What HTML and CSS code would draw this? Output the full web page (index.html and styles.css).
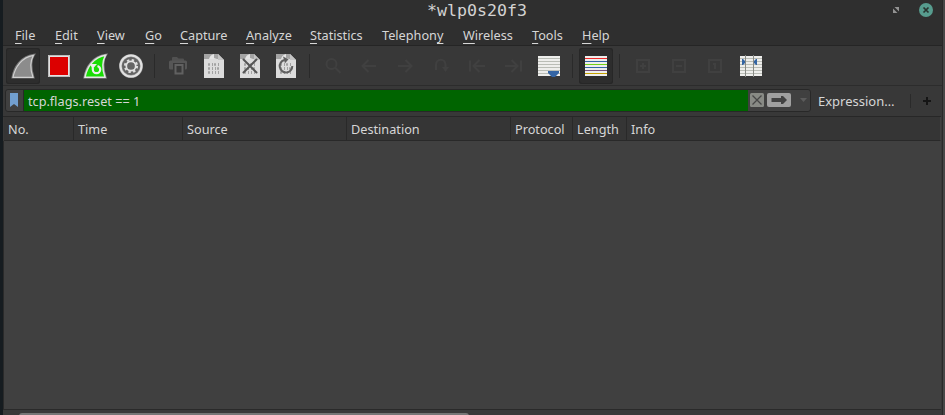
FILE: index.html
```html
<!DOCTYPE html>
<html lang="en">
<head>
<meta charset="utf-8">
<title>*wlp0s20f3</title>
<link rel="stylesheet" href="styles.css">
</head>
<body>
<svg class="defs" width="0" height="0" aria-hidden="true">
  <defs>
    <g id="doc">
      <path d="M7 6h14l6 6v18H7z" fill="#dcdcdc"/>
      <path d="M7 6h14v5H7z" fill="#a4a4a4"/>
      <path d="M12 11q1-4 5-5v4l3 1z" fill="#e4e4e4"/>
      <path d="M21 6l6 6h-6z" fill="#c4c4c4"/>
      <g stroke="#a2a2a2" stroke-width="1" fill="none">
        <path d="M11.500 15.500h1v2h-1zM17.500 15.500h1v2h-1zM15.500 15v3M21.500 15v3"/>
        <path d="M11.500 19.500h1v2h-1zM20.500 19.500h1v2h-1zM15.500 19v3M18.500 19v3"/>
        <path d="M11.500 23.500h1v2h-1zM15.500 23v3M18.500 23v3M21.500 23v3"/>
      </g>
    </g>
    <g id="sheet"><path d="M6 8h22v20H6z" fill="#eeeeec"/></g>
  </defs>
</svg>
<div class="window">
  <header class="titlebar">
    <span class="title">*wlp0s20f3</span>
    <svg class="restore" width="8" height="8" viewBox="0 0 8 8"><path d="M2.500 1H7v4.500zM1 2.500V7h4.500z" fill="#939393"/></svg>
    <svg class="close" width="14" height="14" viewBox="0 0 14 14"><circle cx="7" cy="7" r="7" fill="#579c8e"/><path d="M4.500 4.500l5 5m0-5l-5 5" stroke="#29332f" stroke-width="1.700"/></svg>
  </header>
  <nav class="menubar">
    <span><u>F</u>ile</span><span><u>E</u>dit</span><span><u>V</u>iew</span><span><u>G</u>o</span><span><u>C</u>apture</span><span><u>A</u>nalyze</span><span><u>S</u>tatistics</span><span>Telephon<u>y</u></span><span><u>W</u>ireless</span><span><u>T</u>ools</span><span><u>H</u>elp</span>
  </nav>
  <div class="toolbar">
    <span class="tool on"><svg viewBox="0 0 34 36"><path d="M6.500 29.500C8 19 15 8.500 28 6.800c-4 6-3 15-.5 22.700z" fill="#8c8c8c" stroke="#777" stroke-width="2"/><path d="M7 29.300C9 19 16 9 27.500 7.300c-3.500 6-3 15-.5 22z" fill="#8c8c8c" stroke="#d0d0d0" stroke-width="1.200"/></svg></span>
    <span class="tool"><svg viewBox="0 0 34 36"><path d="M6 7h22v22H6z" fill="#e2e2e2"/><path d="M6.500 7.500h21v21h-21z" fill="none" stroke="#bcbcbc"/><path d="M8 9h18v18H8z" fill="#dc0000"/></svg></span>
    <span class="tool"><svg viewBox="0 0 34 36"><path d="M6.500 29.500C8 19 15 8.500 28 6.800c-4 6-3 15-.5 22.700z" fill="#19dc05" stroke="#929292" stroke-width="2"/><path d="M7 29.300C9 19 16 9 27.500 7.300c-3.500 6-3 15-.5 22z" fill="#19dc05" stroke="#e5e5e5" stroke-width="1.400"/><path d="M14.800 19.500v2a3.700 3.700 0 0 0 7.400 0c0-1.800-1-3-2.700-3.500" fill="none" stroke="#eee" stroke-width="2.200"/><path d="M12 16h7l-4.500 5z" fill="#eee"/></svg></span>
    <span class="tool"><svg viewBox="0 0 34 36"><circle cx="17" cy="18" r="10.500" fill="#646464" stroke="#929292" stroke-width="3"/><circle cx="17" cy="18" r="10.500" fill="none" stroke="#e2e2e2" stroke-width="2"/><circle cx="17" cy="18" r="6" fill="none" stroke="#ddd" stroke-width="2.200" stroke-dasharray="2.350 2.362"/><circle cx="17" cy="18" r="4.700" fill="#646464" stroke="#e2e2e2" stroke-width="1.700"/></svg></span>
    <i class="sep"></i>
    <span class="tool"><svg viewBox="0 0 34 36"><path d="M11 10q0-1 1-1h4l1.500 1.500H22q1 0 1 1V13H11z" fill="#515151"/><path d="M8 14q0-1.500 1.500-1.500h15Q26 12.500 26 14v6q0 1.500-1.500 1.500H24V15H12v6.500H9.500Q8 21.500 8 20z" fill="#565656"/><path d="M14.500 17h7v8.500h-7z" fill="#383838" stroke="#616161" stroke-width="2"/></svg></span>
    <span class="tool"><svg viewBox="0 0 34 36"><use href="#doc"/></svg></span>
    <span class="tool"><svg viewBox="0 0 34 36"><use href="#doc"/><path d="M10.500 11.500l13 13m0-13l-13 13" stroke="#555" stroke-width="2" stroke-linecap="round"/></svg></span>
    <span class="tool"><svg viewBox="0 0 34 36"><use href="#doc"/><path d="M15.500 12a6.300 6.300 0 1 0 7.800 6" fill="none" stroke="#606060" stroke-width="2"/><path d="M14 8.500l5.500 2.700-3.500 4z" fill="#606060"/></svg></span>
    <i class="sep"></i>
    <span class="tool dim"><svg viewBox="0 0 34 36"><circle cx="15.500" cy="16" r="5"/><path d="M19 19.500l5.500 5.500"/></svg></span>
    <span class="tool dim"><svg viewBox="0 0 34 36"><path d="M24 18H11m5.500-6l-6 6 6 6"/></svg></span>
    <span class="tool dim"><svg viewBox="0 0 34 36"><path d="M10 18h13m-5.500-6l6 6-6 6"/></svg></span>
    <span class="tool dim"><svg viewBox="0 0 34 36"><path d="M12 22v-5c0-7 9.500-7 9.500 0v4"/><path class="tip" d="M18 19h7l-3.500 5z"/></svg></span>
    <span class="tool dim"><svg viewBox="0 0 34 36"><path d="M10 12.500v11M25 18H14m5.500-6l-6 6 6 6"/></svg></span>
    <span class="tool dim"><svg viewBox="0 0 34 36"><path d="M25 12.500v11M9 18h12m-5.500-6l6 6-6 6"/></svg></span>
    <span class="tool"><svg viewBox="0 0 34 36"><use href="#sheet"/><path d="M6 10.500h22M6 13.500h22M6 16.500h22M6 19.500h22M6 22.500h22M6 25.500h22" stroke="#babdb6"/><path d="M16 23h11v2l-4 4h-3l-4-4z" fill="#3465a4"/></svg></span>
    <i class="sep"></i>
    <span class="tool on"><svg viewBox="0 0 34 36"><use href="#sheet"/><path d="M6 10.500h22" stroke="#ef2929"/><path d="M6 13.500h22M6 19.500h22" stroke="#3465a4"/><path d="M6 16.500h22" stroke="#73d216"/><path d="M6 22.500h22" stroke="#75507b"/><path d="M6 25.500h22" stroke="#c4a000"/></svg></span>
    <i class="sep"></i>
    <span class="tool dim"><svg viewBox="0 0 34 36"><path d="M11 12h12v12H11zM14 18h6M17 15v6"/></svg></span>
    <span class="tool dim"><svg viewBox="0 0 34 36"><path d="M11 12h12v12H11zM14 18h6"/></svg></span>
    <span class="tool dim"><svg viewBox="0 0 34 36"><path d="M11 12h12v12H11zM15 16h2v5"/></svg></span>
    <span class="tool"><svg viewBox="0 0 34 36"><use href="#sheet"/><path d="M6 10.500h22M6 13.500h22M6 16.500h22M6 19.500h22M6 22.500h22M6 25.500h22" stroke="#babdb6"/><path d="M11.500 7v22M19.500 7v22" stroke="#888a85"/><path d="M8 11h1l2 2v2l-2 2H8zM23 11h-1l-2 2v2l2 2h1z" fill="#3465a4"/></svg></span>
  </div>
  <div class="filterbar">
    <div class="filter">
      <span class="bookmark"><svg width="8" height="14" viewBox="0 0 8 14"><path d="M0 0h8v14l-4-3-4 3z" fill="#729fcf"/></svg></span>
      <span class="query">tcp.flags.reset == 1</span>
      <span class="actions">
        <svg width="14" height="14" viewBox="0 0 14 14"><rect width="14" height="14" rx="1.500" fill="#888a85"/><path d="M2.500 2.500l9 9m0-9l-9 9" stroke="#474747" stroke-width="1.300"/></svg>
        <svg width="24" height="14" viewBox="0 0 24 14"><rect width="24" height="14" rx="2" fill="#a0a0a0"/><path d="M4.500 5H14V3l2 0 4 4-4 4h-2V9H4.500z" fill="#424242"/></svg>
        <svg class="drop" width="7" height="4" viewBox="0 0 7 4"><path d="M0 0h7L3.500 4z" fill="#5b5b5b"/></svg>
      </span>
    </div>
    <span class="expression">Expression…</span>
    <i class="sep short"></i>
    <svg class="plus" width="8" height="8" viewBox="0 0 8 8"><path d="M4 0v8M0 4h8" stroke="#151515" stroke-width="2"/></svg>
  </div>
  <main class="packets">
    <div class="columns"><span>No.</span><span>Time</span><span>Source</span><span>Destination</span><span>Protocol</span><span>Length</span><span>Info</span></div>
    <div class="rows"></div>
    <div class="scroll"><i class="thumb"></i></div>
  </main>
</div>
</body>
</html>
```
FILE: styles.css
```css
* { box-sizing: border-box; }
body {
  margin: 0;
  height: 415px;
  overflow: hidden;
  background: #474747;
  color: #d6d6d6;
  font: 12.7px/20px "Noto Sans", "Open Sans", sans-serif;
}
svg { display: block; flex: none; }
.defs { position: absolute; }
.window {
  width: 943px;
  height: 415px;
  display: flex;
  flex-direction: column;
  background: #383838;
  border-left: 3px solid #161c20;
  border-right: 1px solid #292929;
}
.titlebar {
  height: 22px;
  flex: none;
  display: grid;
  grid-template-columns: 424px 465px 27px 14px;
  align-items: start;
  background: #2f2f2f;
}
.title {
  grid-column: 2;
  font: 16.600px/21px "DejaVu Sans Mono", monospace;
  color: #d3d3d3;
}
.restore { margin-top: 6px; }
.close { margin-top: 3px; }
.menubar {
  height: 24px;
  flex: none;
  display: grid;
  grid-template-columns: 40px 42px 48px 35px 66px 64px 72px 81px 69px 50px 40px;
  padding: 3px 0 0 12px;
  background: #2f2f2f;
  border-bottom: 1px solid #252525;
  white-space: nowrap;
}
.menubar u { text-underline-offset: 3px; text-decoration-thickness: 1px; text-decoration-skip-ink: none; }
.toolbar {
  height: 40px;
  flex: none;
  display: flex;
  align-items: center;
  padding-left: 2px;
  border-bottom: 1px solid #2c2c2c;
}
.tool { width: 34px; height: 36px; margin: 1px 1px 0; border-radius: 3px; flex: none; }
.tool svg { width: 34px; height: 36px; }
.on { background: #2d2d2d; box-shadow: inset 0 0 0 1px #272727; }
.dim svg { fill: none; stroke: #404040; stroke-width: 2; }
.dim .tip { fill: #404040; stroke: none; }
.sep { width: 1px; height: 24px; margin: 0 5px; background: #2a2a2a; flex: none; }
.filterbar { height: 30px; flex: none; display: flex; align-items: center; padding: 0 0 1px 2px; }
.filter {
  width: 806px;
  height: 23px;
  display: flex;
  overflow: hidden;
  border: 1px solid #282828;
  border-radius: 3px;
  background: #404040;
}
.bookmark { width: 18px; display: flex; padding: 3px 0 0 4px; border-right: 1px solid #292929; }
.query { width: 724px; padding-left: 4px; background: #006400; line-height: 22px; }
.actions { display: flex; padding: 3px 0 0 2px; gap: 3px; }
.drop { margin: 5px 0 0 6px; }
.expression { width: 86px; margin-left: 7px; font-size: 13px; }
.short { height: 14px; margin: 0 12px 0 6px; }
.packets { flex: 1; display: flex; flex-direction: column; border-top: 1px solid #272727; margin-right: 1px; }
.columns {
  height: 24px;
  flex: none;
  display: grid;
  grid-template-columns: 70px 109px 164px 164px 62px 54px 1fr;
  margin-left: 1px;
  background: #353535;
  border-bottom: 1px solid #292929;
  border-right: 1px solid #404040;
}
.columns span { padding-left: 4px; line-height: 25px; border-right: 1px solid #292929; }
.columns span:last-child { border-right: 0; }
.rows { flex: 1; background: #404040; border-left: 1px solid #2a2a2a; }
.scroll { height: 6px; flex: none; border-top: 1px solid #2a2a2a; background: #3a3a3a; padding: 3px 0 0 16px; overflow: hidden; }
.thumb { display: block; width: 450px; height: 8px; border-radius: 3px; background: #777; }
```
